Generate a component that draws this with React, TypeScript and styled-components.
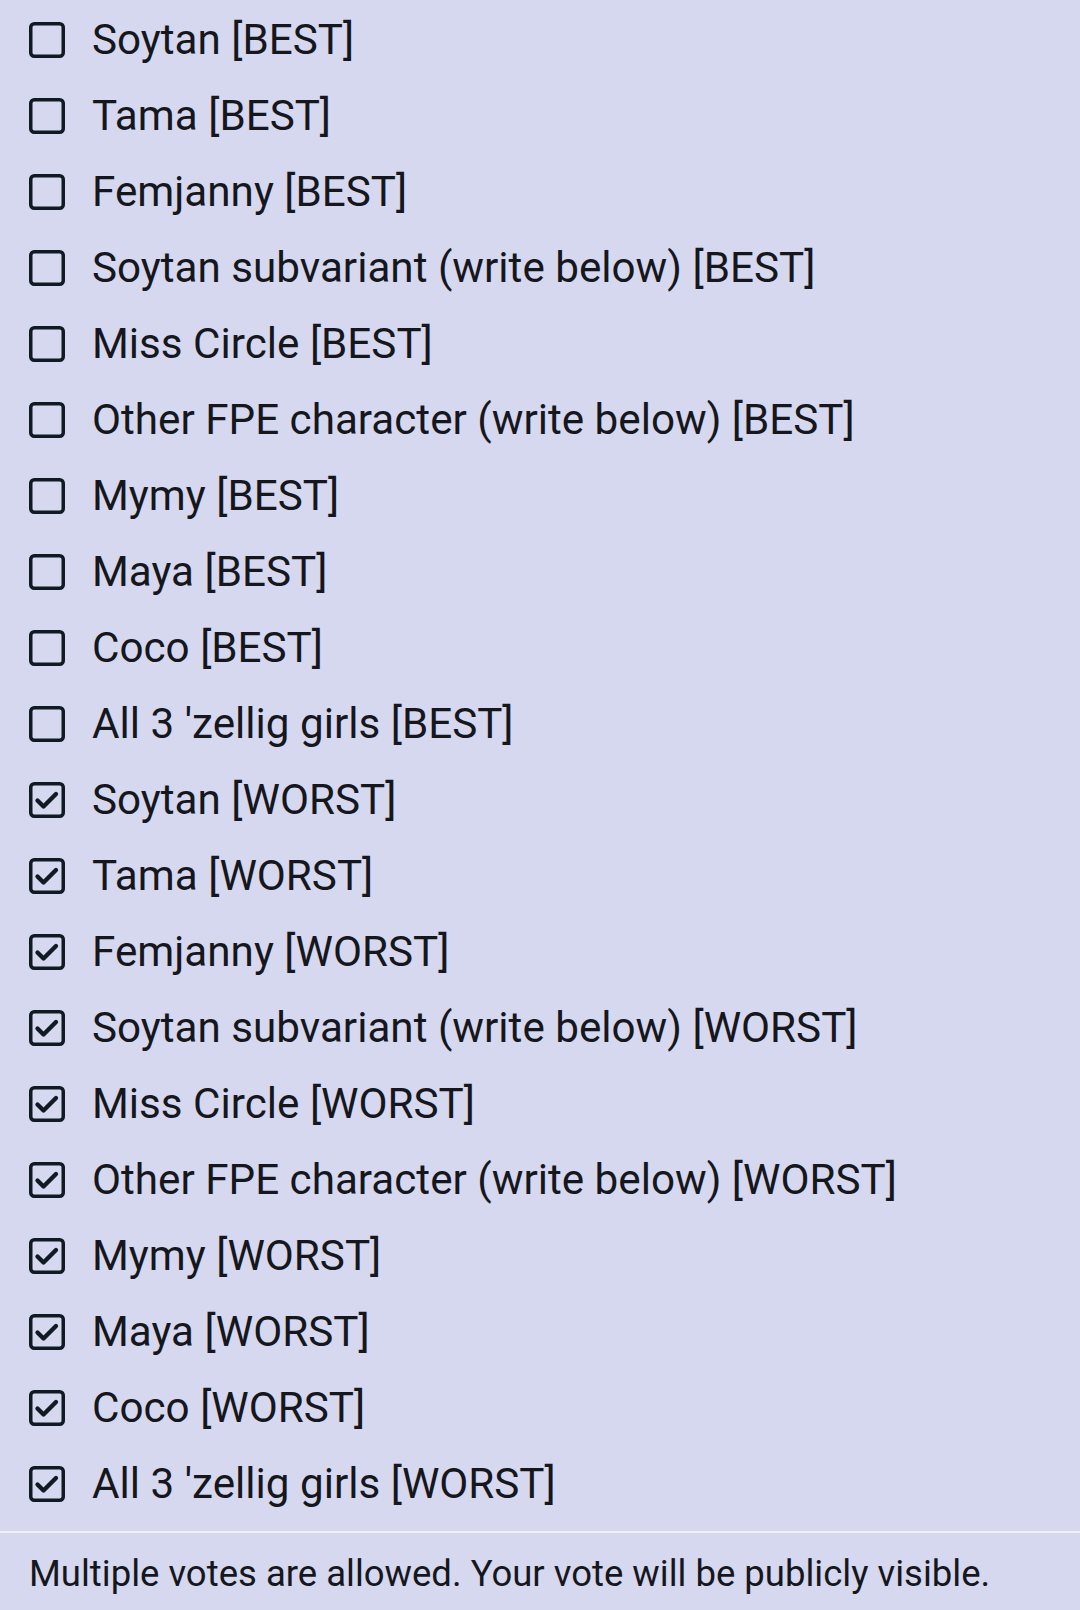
import React from "react";
import styled, { createGlobalStyle } from "styled-components";

const Global = createGlobalStyle`
  html, body {
    margin: 0;
    padding: 0;
    background: #d5d8ef;
  }
  body {
    font-family: Roboto, "Liberation Sans", sans-serif;
    color: #16171d;
  }
`;

const Page = styled.div`
  width: 1080px;
  min-height: 1610px;
  background: #d5d8ef;
  display: flex;
  flex-direction: column;
`;

const List = styled.ul`
  list-style: none;
  margin: 0;
  padding: 2px 0 0 0;
  display: flex;
  flex-direction: column;
`;

const Row = styled.li`
  height: 76px;
  display: flex;
  align-items: center;
  padding-left: 28px;
  gap: 26px;
`;

const Label = styled.span`
  font-size: 42.2px;
  line-height: 1;
  color: #16171d;
  white-space: nowrap;
`;

const Divider = styled.hr`
  margin: 9px 0 0 0;
  border: none;
  height: 2px;
  background: #f1f2fa;
`;

const Footer = styled.p`
  margin: 0;
  padding: 4px 0 0 29px;
  height: 77px;
  box-sizing: border-box;
  display: flex;
  align-items: center;
  font-size: 36.5px;
  color: #16171d;
  white-space: nowrap;
`;

const BoxSvg = styled.svg`
  flex: none;
  width: 38px;
  height: 38px;
  display: block;
`;

function CheckBox({ checked }: { checked: boolean }) {
  return (
    <BoxSvg viewBox="0 0 38 38">
      <rect x="2.75" y="2.75" width="32.5" height="32.5" rx="3.5" fill="none" stroke="#101a23" strokeWidth="3.5" />
      {checked && (
        <path d="M9.5 19.5 L15.5 25.5 L28 13" fill="none" stroke="#101a23" strokeWidth="4.3" strokeLinecap="round" strokeLinejoin="round" />
      )}
    </BoxSvg>
  );
}

const names = [
  "Soytan",
  "Tama",
  "Femjanny",
  "Soytan subvariant (write below)",
  "Miss Circle",
  "Other FPE character (write below)",
  "Mymy",
  "Maya",
  "Coco",
  "All 3 'zellig girls",
];

const options = [
  ...names.map((n) => ({ label: `${n} [BEST]`, checked: false })),
  ...names.map((n) => ({ label: `${n} [WORST]`, checked: true })),
];

export default function App() {
  return (
    <Page>
      <Global />
      <List>
        {options.map((o, i) => (
          <Row key={i}>
            <CheckBox checked={o.checked} />
            <Label>{o.label}</Label>
          </Row>
        ))}
      </List>
      <Divider />
      <Footer>Multiple votes are allowed. Your vote will be publicly visible.</Footer>
    </Page>
  );
}
